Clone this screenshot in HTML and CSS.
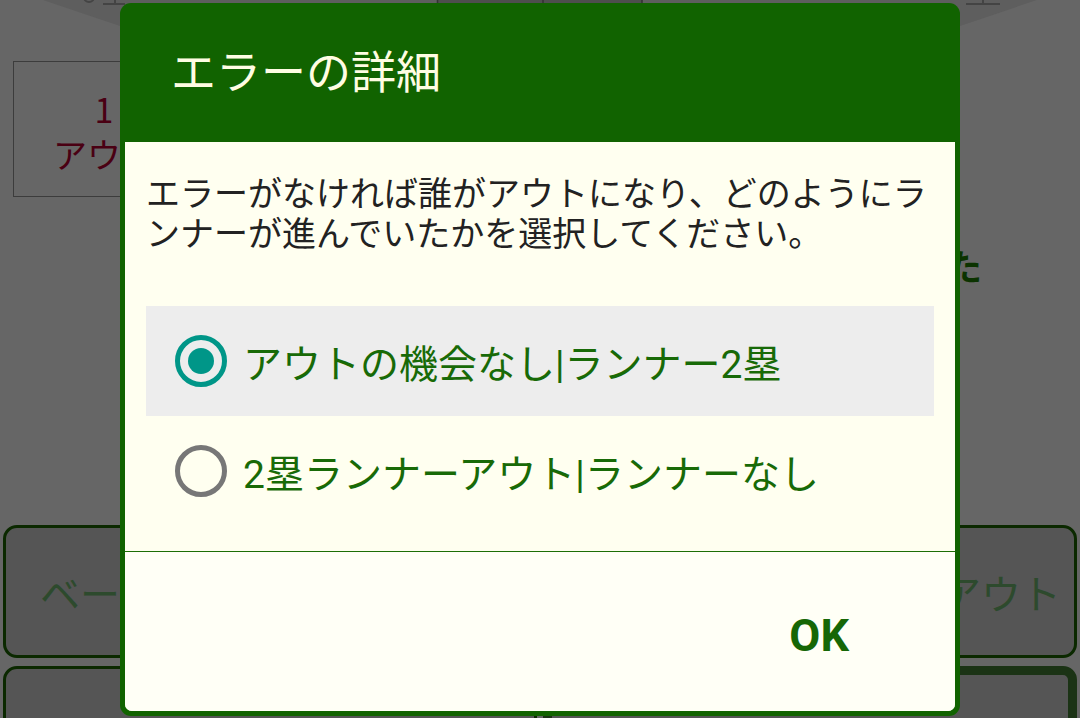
FILE: index.html
```html
<!DOCTYPE html>
<html lang="ja">
<head>
<meta charset="utf-8">
<title>エラーの詳細</title>
<link rel="stylesheet" href="styles.css">
</head>
<body>
<div class="screen">
  <svg class="field" width="1080" height="40" viewBox="0 0 1080 40">
    <polygon points="43,0 120,26 960,26 1037,0" fill="#5e5e5e"/>
    <rect x="437" y="0" width="205" height="4" fill="#4e4e4e"/>
    <line x1="437.5" y1="0" x2="437.5" y2="4" stroke="#333" stroke-width="1.5"/>
    <line x1="543" y1="0" x2="543" y2="4" stroke="#333" stroke-width="1.5"/>
    <line x1="642" y1="0" x2="642" y2="4" stroke="#333" stroke-width="1.5"/>
    <circle cx="89" cy="-3" r="5" fill="none" stroke="#444" stroke-width="2"/>
    <line x1="103" y1="4" x2="125" y2="4" stroke="#444" stroke-width="2"/>
    <line x1="115" y1="0" x2="115" y2="4" stroke="#444" stroke-width="2"/>
    <line x1="966" y1="4" x2="1000" y2="4" stroke="#444" stroke-width="2"/>
    <line x1="983" y1="0" x2="983" y2="4" stroke="#444" stroke-width="2"/>
  </svg>

  <div class="count-row">
    <div class="count-box">1<br>アウト</div>
  </div>

  <div class="result-row">
    <span class="result-text">した</span>
  </div>

  <div class="btn-grid">
    <div class="bg-btn bg-btn-left">ベース</div>
    <div class="bg-btn bg-btn-right">アウト</div>
    <div class="bg-btn"></div>
    <div class="bg-btn bg-btn-strong"></div>
  </div>

  <div class="dialog">
    <div class="dialog-header">
      <h1 class="dialog-title">エラーの詳細</h1>
    </div>
    <div class="dialog-content">
      <div class="dialog-body">
        <p class="dialog-message">エラーがなければ誰がアウトになり、どのようにランナーが進んでいたかを選択してください。</p>
        <div class="options">
          <label class="option option-selected">
            <span class="radio radio-on"><span class="radio-dot"></span></span>
            <span class="option-label">アウトの機会なし|ランナー2塁</span>
          </label>
          <label class="option">
            <span class="radio"></span>
            <span class="option-label">2塁ランナーアウト|ランナーなし</span>
          </label>
        </div>
      </div>
      <div class="dialog-footer">
        <span class="ok-btn">OK</span>
      </div>
    </div>
  </div>
</div>
</body>
</html>
```

FILE: styles.css
```css
html, body {
  margin: 0;
  padding: 0;
}

body {
  width: 1080px;
  height: 718px;
  overflow: hidden;
  background: #666666;
  font-family: "Noto Sans CJK JP", sans-serif;
}

.screen {
  position: relative;
  width: 1080px;
  height: 718px;
  overflow: hidden;
  display: flex;
  flex-direction: column;
}

.field {
  position: absolute;
  left: 0;
  top: 0;
}

.count-row {
  display: flex;
  padding: 61px 0 0 13px;
}

.count-box {
  box-sizing: border-box;
  width: 182px;
  height: 136px;
  border: 1px solid #3c3c3c;
  color: #4a0013;
  font-size: 34px;
  line-height: 45px;
  text-align: center;
  padding-top: 24px;
}

.result-row {
  display: flex;
  justify-content: flex-end;
  padding: 46px 98px 0 0;
}

.result-text {
  font-size: 36px;
  line-height: 44px;
  font-weight: 700;
  color: #0b3300;
}

.btn-grid {
  display: grid;
  grid-template-columns: 1fr 1fr;
  grid-template-rows: 133px 133px;
  column-gap: 6px;
  row-gap: 8px;
  padding: 238px 3px 0;
}

.bg-btn {
  box-sizing: border-box;
  border: 3px solid #0b2900;
  border-radius: 14px;
  background: #555555;
  color: #2d4a2d;
  font-size: 40px;
  display: flex;
  align-items: center;
  justify-content: center;
  white-space: nowrap;
  overflow: hidden;
}

.bg-btn-left {
  justify-content: flex-start;
  padding-left: 34px;
}

.bg-btn-right {
  justify-content: flex-end;
  padding-right: 13px;
}

.bg-btn-strong {
  border: 9px solid #1b3315;
}

/* dialog */
.dialog {
  position: absolute;
  left: 120px;
  top: 3px;
  width: 840px;
  height: 713px;
  box-sizing: border-box;
  padding: 0 5px 5px;
  background: #116300;
  border-radius: 11px;
  display: flex;
  flex-direction: column;
}

.dialog-header {
  height: 139px;
  display: flex;
  align-items: center;
  padding-left: 46px;
  padding-bottom: 6px;
  box-sizing: border-box;
  flex-shrink: 0;
}

.dialog-title {
  margin: 0;
  font-size: 45px;
  font-weight: 400;
  color: #fffde3;
  line-height: 1;
}

.dialog-content {
  flex: 1;
  display: flex;
  flex-direction: column;
  background: #fffff0;
  border-radius: 0 0 7px 7px;
}

.dialog-body {
  height: 410px;
  box-sizing: border-box;
  padding: 30px 21px 0;
  border-bottom: 1px solid #1d6e05;
}

.dialog-message {
  margin: 0;
  font-size: 34px;
  line-height: 40px;
  color: #222222;
}

.options {
  margin-top: 54px;
  display: flex;
  flex-direction: column;
}

.option {
  height: 110px;
  display: flex;
  align-items: center;
  padding-left: 29px;
}

.option-selected {
  background: #ededed;
}

.radio {
  box-sizing: border-box;
  width: 52px;
  height: 52px;
  border-radius: 50%;
  border: 5px solid #777777;
  display: flex;
  align-items: center;
  justify-content: center;
  flex-shrink: 0;
}

.radio-on {
  border-color: #009688;
}

.radio-dot {
  width: 26px;
  height: 26px;
  border-radius: 50%;
  background: #009688;
}

.option-label {
  margin-left: 16px;
  font-family: Roboto, "Noto Sans CJK JP", sans-serif;
  font-size: 39px;
  color: #186a07;
  white-space: nowrap;
}

.dialog-footer {
  flex: 1;
  display: flex;
  justify-content: flex-end;
  align-items: center;
  padding: 0 106px 0 0;
  background: #fffff6;
  border-radius: 0 0 7px 7px;
}

.ok-btn {
  font-family: Roboto, sans-serif;
  font-weight: 700;
  font-size: 45px;
  color: #166706;
  margin-top: 8px;
}
```
